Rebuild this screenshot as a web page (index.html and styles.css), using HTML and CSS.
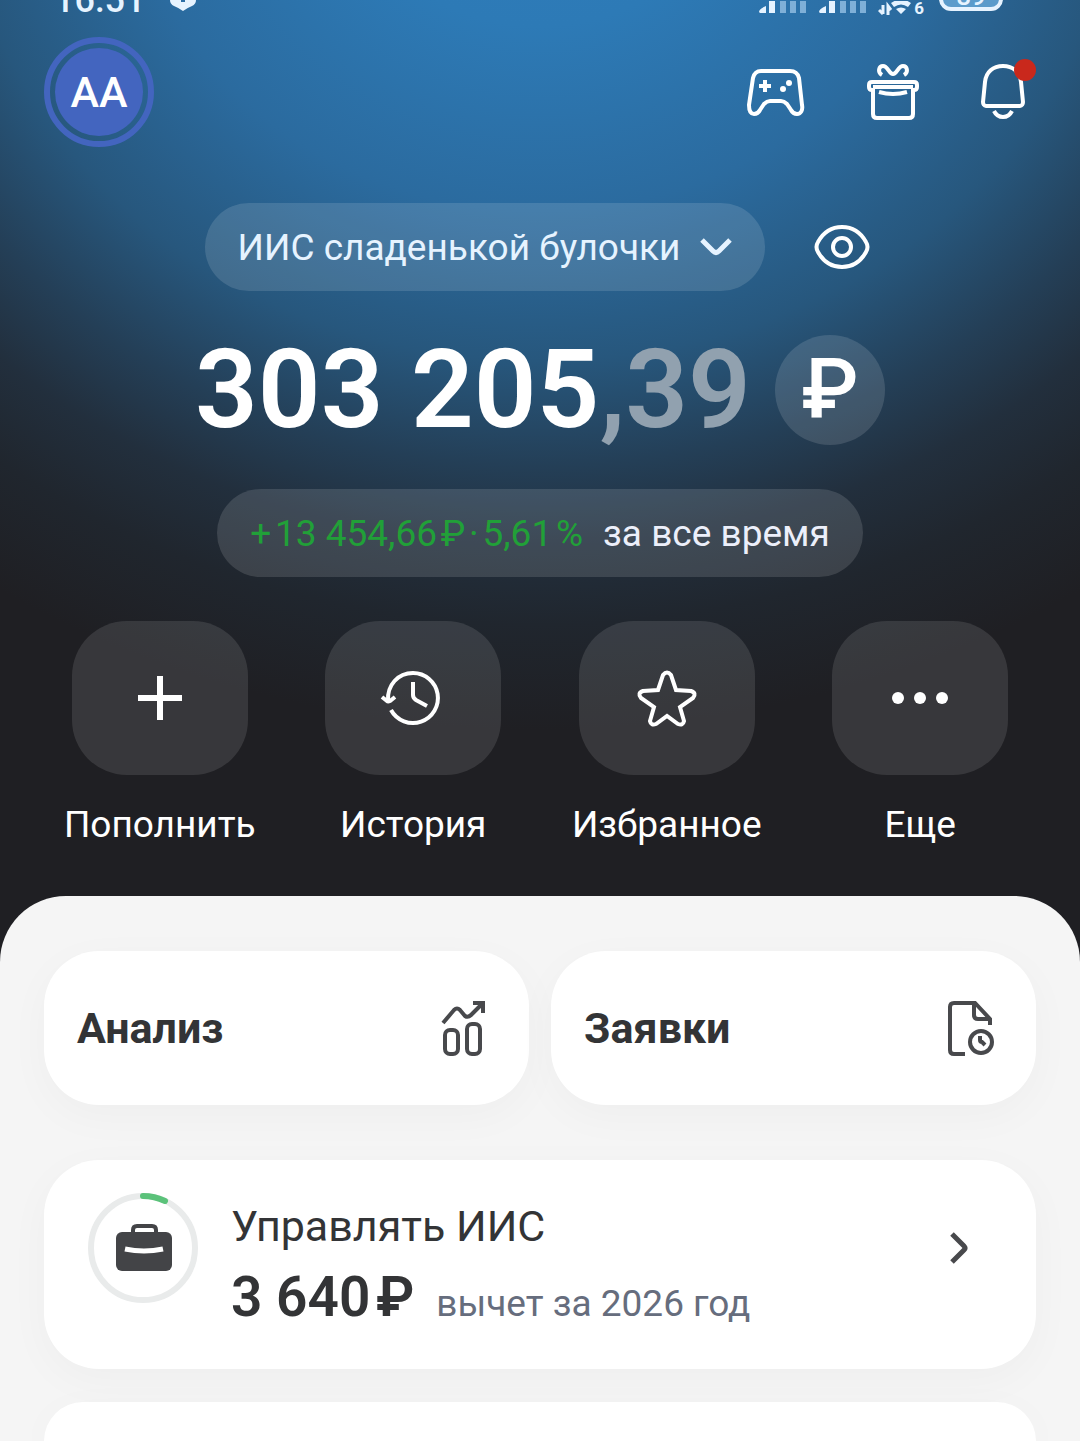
FILE: index.html
```
<!DOCTYPE html>
<html lang="ru">

<head>
    <meta charset="UTF-8">
    <meta name="viewport" content="width=device-width, initial-scale=1.0">
    <title>Портфель</title>
    <link rel="stylesheet" href="styles.css">
</head>
<body>
    <!-- Status Bar -->
    <div class="status-bar">
        <div class="status-left">
            <span class="status-time">16:51</span>
            <svg width="28" height="28" viewBox="0 0 28 28">
                <path d="M1 2h26v15q0 4-4 6-5 2-9 5-4-3-9-5-4-2-4-6z" fill="#e6f3ff"/>
                <path d="M14 10v9" stroke="#2c6ea5" stroke-width="4"/>
            </svg>
        </div>
        <div class="status-right">
            <svg width="49" height="14" viewBox="0 0 49 14">
                <path d="M1 11q0-3 7-6v7H2zM11 12V0h6v12z" fill="#e6f3ff"/>
                <path d="M22 0h6v12h-6zM32 0h6v12h-6zM42 0h6v12h-6z" fill="#7fb0d8"/>
            </svg>
            <svg width="49" height="14" viewBox="0 0 49 14">
                <path d="M1 11q0-3 7-6v7H2zM11 12V0h6v12z" fill="#e6f3ff"/>
                <path d="M22 0h6v12h-6zM32 0h6v12h-6zM42 0h6v12h-6z" fill="#7fb0d8"/>
            </svg>
            <div class="wifi">
                <svg width="36" height="14" viewBox="0 0 36 14">
                    <path d="M5 4v9M1 9l4 4M10 14V5l3 4" fill="none" stroke="#e6f3ff" stroke-width="3"/>
                    <path d="M13 2q10-7 20 0l-3 4q-7-5-14 0zM18 8q5-3 10 0l-5 5z" fill="#e6f3ff"/>
                </svg>
                <span class="wifi-gen">6</span>
            </div>
            <div class="battery">89</div>
        </div>
    </div>

    <!-- Top Bar -->
    <header class="top-bar">
        <button class="avatar"><span>АА</span></button>
        <nav class="top-icons">
            <button class="icon-btn" aria-label="Игры">
                <svg width="82" height="66" viewBox="0 0 82 66" fill="none" stroke="#fff" stroke-width="4">
                    <path d="M27 12H56c5 0 8 3 9 7l3 27c1 5-1 9-5 9-3 0-5-2-6-4l-4-6c-2-2-3-3-6-3H36c-3 0-4 1-6 3l-4 6c-1 2-3 4-6 4-4 0-5-4-5-9l4-27c1-4 3-7 8-7z"/>
                    <path d="M25 27h12M31 21v12"/>
                    <circle cx="55" cy="24" r="3" fill="#fff" stroke="none"/>
                    <circle cx="49" cy="30" r="3" fill="#fff" stroke="none"/>
                </svg>
            </button>
            <button class="icon-btn" aria-label="Подарки">
                <svg width="66" height="66" viewBox="0 0 66 66" fill="none" stroke="#fff" stroke-width="4">
                    <path d="M13 29V55c0 2 1 4 4 4h32c3 0 4-2 4-4V29"/>
                    <rect x="9" y="23" width="48" height="8" rx="3" stroke="none"/>
                    <path d="M14 31h-2c-2 0-3-1-3-3v-2c0-2 1-3 3-3h42c2 0 3 1 3 3v2c0 2-1 3-3 3h-2M13 28h40" stroke-width="4"/>
                    <path d="M19 33q14 4 28 0"/>
                    <path d="M22 16c-5-3-3-9 1-9 5 0 6 8 10 8s5-8 10-8c4 0 6 6 1 9"/>
                </svg>
            </button>
            <button class="icon-btn" aria-label="Уведомления">
                <svg width="66" height="66" viewBox="0 0 66 66" fill="none" stroke="#fff" stroke-width="4">
                    <path d="M33 7c-10 0-17 6-18 16l-2 20c0 2 1 4 3 4h34c2 0 3-2 3-4l-2-20C50 13 43 7 33 7z"/>
                    <path d="M24 52c2 4 5 6 9 6s7-2 9-6"/>
                </svg>
                <span class="badge"></span>
            </button>
        </nav>
    </header>

    <!-- Account and Balance -->
    <main>
        <section class="summary">
            <div class="account-row">
                <button class="pill">
                    ИИС сладенькой булочки
                    <svg width="32" height="22" viewBox="0 0 32 22" fill="none" stroke="#e6f3ff" stroke-width="5">
                        <path d="M2 4l11 11q3 3 6 0L30 4"/>
                    </svg>
                </button>
                <button class="icon-btn" aria-label="Скрыть баланс">
                    <svg width="66" height="66" viewBox="0 0 66 66" fill="none" stroke="#fff" stroke-width="4">
                        <path d="M33 13c11 0 19 6 24 15q3 5 0 10c-5 9-13 15-24 15S14 47 9 38q-3-5 0-10c5-9 13-15 24-15z"/>
                        <circle cx="33" cy="33" r="9"/>
                    </svg>
                </button>
            </div>
            <div class="balance-row">
                <h1 class="balance">303 205<span class="cents">,39</span></h1>
                <button class="currency">₽</button>
            </div>
            <button class="pill profit">
                <span class="gain">+&#8202;13 454,66&#8202;₽&#8202;·&#8202;5,61&#8202;%</span>
                <span>за все время</span>
            </button>
        </section>

        <!-- Actions -->
        <section class="actions">
            <button class="action">
                <span class="tile">
                    <svg width="66" height="66" viewBox="0 0 66 66" fill="none" stroke="#fff" stroke-width="6">
                        <path d="M11 33h44M33 11v44"/>
                    </svg>
                </span>
                Пополнить
            </button>
            <button class="action">
                <span class="tile">
                    <svg width="66" height="66" viewBox="0 0 66 66" fill="none" stroke="#fff" stroke-width="4">
                        <path d="M8 36C7 20 18 8 33 8a25 25 0 1 1-22 37"/>
                        <path d="M2 32l5 4q1 1 3 0l5-4M33 17v13q0 3 3 5l11 6"/>
                    </svg>
                </span>
                История
            </button>
            <button class="action">
                <span class="tile">
                    <svg width="66" height="66" viewBox="0 0 66 66" fill="none" stroke="#fff" stroke-width="4">
                        <path d="M29 10q4-5 8 0l5 15 15 1q6 2 2 7L46 42l4 14q-1 5-6 3L33 51 22 59q-5 2-6-3l4-14L7 33q-4-5 2-7l15-1z"/>
                    </svg>
                </span>
                Избранное
            </button>
            <button class="action">
                <span class="tile">
                    <svg width="66" height="66" viewBox="0 0 66 66" fill="#fff">
                        <circle cx="11" cy="33" r="6"/>
                        <circle cx="33" cy="33" r="6"/>
                        <circle cx="55" cy="33" r="6"/>
                    </svg>
                </span>
                Еще
            </button>
        </section>

        <!-- Bottom Sheet -->
        <section class="sheet">
            <div class="shortcuts">
                <a href="#analysis" class="card shortcut">
                    Анализ
                    <svg width="66" height="66" viewBox="0 0 66 66" fill="none" stroke="#48494c" stroke-width="4">
                        <path d="M13 28l11-13q3-3 6 0l5 6q3 2 6-1L53 8M43 8h10v10"/>
                        <rect x="15" y="35" width="13" height="24" rx="5"/>
                        <rect x="37" y="29" width="13" height="30" rx="5"/>
                    </svg>
                </a>
                <a href="#orders" class="card shortcut">
                    Заявки
                    <svg width="66" height="66" viewBox="0 0 66 66" fill="none" stroke="#48494c" stroke-width="4">
                        <path d="M28 59H17q-4 0-4-4V12q0-4 4-4h21l15 16v6"/>
                        <path d="M37 8v12q0 4 4 4h12"/>
                        <circle cx="44" cy="47" r="11"/>
                        <path d="M43 41v4q0 2 2 2l3 3"/>
                    </svg>
                </a>
            </div>

            <a href="#iis" class="card iis">
                <svg width="110" height="110" viewBox="0 0 110 110" fill="none">
                    <circle cx="55" cy="55" r="52" stroke="#e9ebeb" stroke-width="6"/>
                    <path d="M55 3a52 52 0 0 1 22 5" stroke="#5bc27a" stroke-width="6" stroke-linecap="round"/>
                    <rect x="28" y="39" width="56" height="39" rx="6" fill="#434447"/>
                    <path d="M45 41v-4q0-4 4-4h15q4 0 4 4v4" stroke="#434447" stroke-width="4"/>
                    <path d="M37 56q19 4 38 0" stroke="#fff" stroke-width="5"/>
                </svg>
                <div class="iis-text">
                    <h2>Управлять ИИС</h2>
                    <p><strong>3 640&#8202;₽</strong> <span>вычет за 2026 год</span></p>
                </div>
                <svg width="44" height="44" viewBox="0 0 44 44" fill="none" stroke="#48494c" stroke-width="5">
                    <path d="M15 8l12 12q2 2 0 4L15 36"/>
                </svg>
            </a>

            <div class="card next-card"></div>
        </section>
    </main>
</body>
</html>
```

FILE: styles.css
```
/* General Styles */
* {
    box-sizing: border-box;
}

body {
    font-family: Roboto, sans-serif;
    margin: 0;
    min-height: 100vh;
    display: flex;
    flex-direction: column;
    color: white;
    background: #1f1f23 radial-gradient(ellipse 1000px 880px at 50% -150px, #2f7dbd 0, #2d7ab6 20%, #2b6b9f 41%, #27577d 58%, #243f57 70%, #222f3d 79%, #20262e 88%, #1f1f23 100%) no-repeat;
}

main {
    flex: 1;
    display: flex;
    flex-direction: column;
}

button {
    font: inherit;
    color: inherit;
    background: none;
    border: none;
    padding: 0;
    cursor: pointer;
}

a {
    color: inherit;
    text-decoration: none;
}

svg {
    display: block;
    flex: none;
}

/* Status Bar */
.status-bar {
    display: flex;
    justify-content: space-between;
    align-items: flex-end;
    height: 15px;
    padding: 0 77px 0 54px;
    overflow: hidden;
    color: #e6f3ff;
}

.status-left,
.status-right,
.wifi {
    display: flex;
    align-items: flex-end;
}

.status-left {
    gap: 24px;
    padding-bottom: 4px;
}

.status-right {
    gap: 11px;
}

.status-time {
    font-size: 36px;
    line-height: 22px;
    font-weight: 500;
}

.wifi-gen {
    font-size: 17px;
    line-height: 14px;
    font-weight: 700;
}

.battery {
    width: 64px;
    height: 36px;
    margin: 0 0 4px 4px;
    border: 4px solid #e6f3ff;
    border-radius: 12px;
    font-size: 26px;
    line-height: 34px;
    font-weight: 500;
    text-align: center;
    background: #5b9bcb;
}

/* Top Bar */
.top-bar {
    display: flex;
    justify-content: space-between;
    align-items: center;
    padding: 22px 44px 0;
}

.avatar {
    width: 110px;
    height: 110px;
    padding: 5px;
    border: 6px solid #4365bf;
    border-radius: 50%;
}

.avatar span {
    display: block;
    border-radius: 50%;
    background: #4365bf;
    font-size: 43px;
    line-height: 88px;
    font-weight: 500;
}

.top-icons {
    display: flex;
    gap: 44px;
}

.icon-btn {
    position: relative;
}

.badge {
    position: absolute;
    top: 0;
    right: 0;
    width: 22px;
    height: 22px;
    border-radius: 50%;
    background: #c9281c;
}

/* Account and Balance */
.summary {
    display: flex;
    flex-direction: column;
    align-items: center;
    padding-top: 56px;
}

.account-row,
.balance-row {
    display: flex;
    align-items: center;
}

.account-row {
    gap: 44px;
}

.pill {
    display: flex;
    align-items: center;
    gap: 20px;
    height: 88px;
    padding: 0 33px;
    border-radius: 44px;
    background: rgba(255, 255, 255, 0.13);
    color: #e6f3ff;
    font-size: 37px;
}

.balance-row {
    gap: 24px;
    margin: 44px 0;
}

.balance {
    margin: 0;
    font-size: 110px;
    line-height: 110px;
    font-weight: 600;
}

.cents {
    color: #91a1af;
}

.currency {
    width: 110px;
    height: 110px;
    border-radius: 50%;
    background: rgba(255, 255, 255, 0.13);
    font-size: 83px;
    line-height: 110px;
    font-weight: 500;
}

.profit {
    color: #eceffa;
}

.gain {
    color: #21a038;
}

/* Actions */
.actions {
    display: grid;
    grid-template-columns: repeat(4, 1fr);
    padding: 44px 33px;
}

.action {
    display: flex;
    flex-direction: column;
    align-items: center;
    gap: 28px;
    font-size: 37px;
    line-height: 44px;
}

.tile {
    display: flex;
    justify-content: center;
    align-items: center;
    width: 176px;
    height: 154px;
    border-radius: 55px;
    background: rgba(255, 255, 255, 0.11);
}

/* Bottom Sheet */
.sheet {
    flex: 1;
    display: flex;
    flex-direction: column;
    margin-top: 5px;
    padding: 55px 44px 0;
    border-radius: 66px 66px 0 0;
    background: #f5f5f5;
    color: #333436;
}

.card {
    border-radius: 55px;
    background: white;
    box-shadow: 0 11px 44px rgba(0, 0, 0, 0.03);
}

.shortcuts {
    display: grid;
    grid-template-columns: 1fr 1fr;
    gap: 22px;
    margin-bottom: 55px;
}

.shortcut {
    display: flex;
    justify-content: space-between;
    align-items: center;
    height: 154px;
    padding: 0 33px;
    font-size: 43px;
    font-weight: 700;
}

.iis {
    display: flex;
    align-items: flex-start;
    gap: 33px;
    margin-bottom: 33px;
    padding: 33px 55px 33px 44px;
}

.iis > svg:last-child {
    align-self: center;
    margin-bottom: 33px;
}

.iis-text {
    flex: 1;
}

.iis-text h2 {
    margin: 0;
    font-size: 43px;
    line-height: 66px;
    font-weight: 400;
}

.iis-text p {
    display: flex;
    align-items: baseline;
    gap: 22px;
    height: 77px;
    margin: 0;
    font-size: 37px;
    line-height: 77px;
    color: #666d7d;
}

.iis-text strong {
    font-size: 55px;
    font-weight: 600;
    color: #333436;
}

.next-card {
    flex: 1;
    border-radius: 55px 55px 0 0;
}
```
